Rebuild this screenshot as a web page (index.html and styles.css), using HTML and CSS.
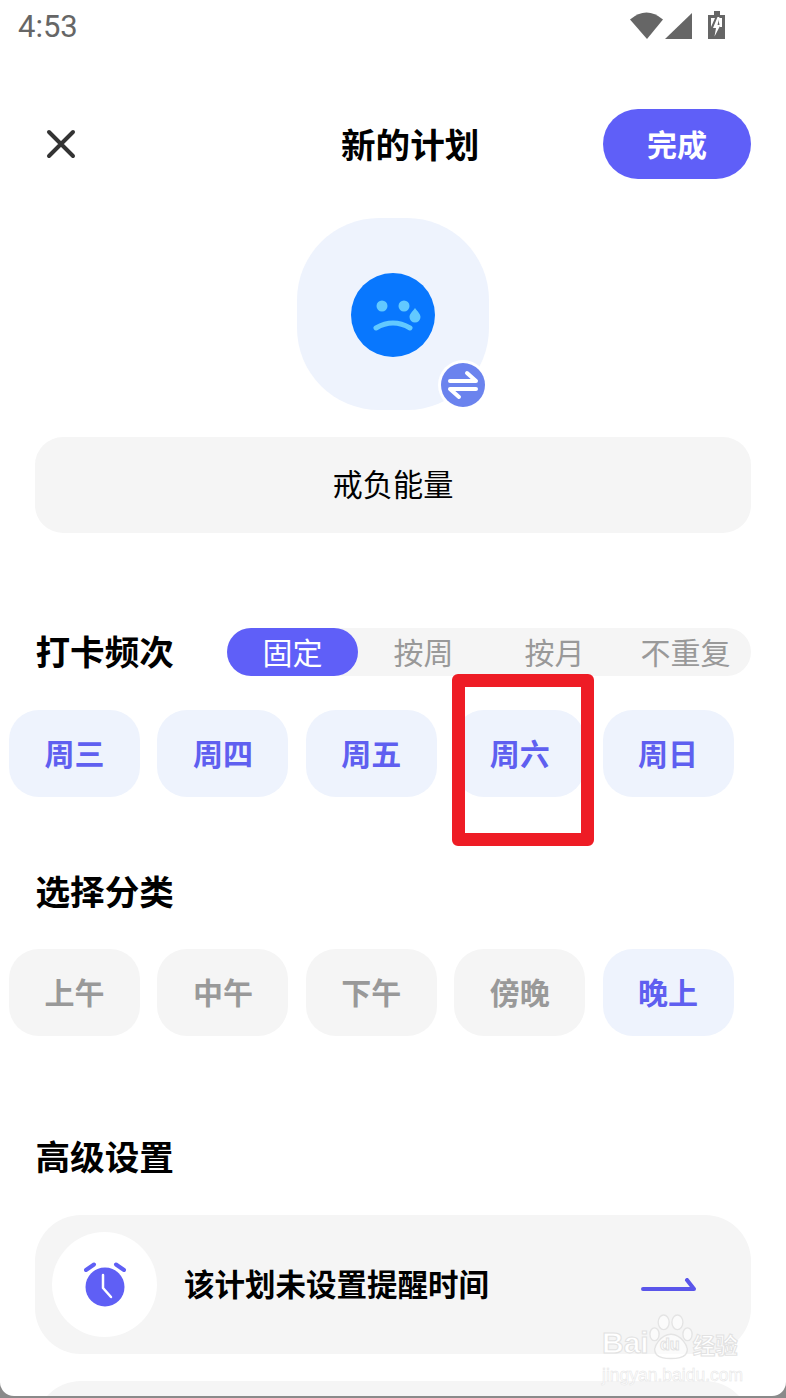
FILE: index.html
```html
<!DOCTYPE html>
<html lang="zh-CN">
<head>
	<meta charset="UTF-8">
	<title>新的计划</title>
	<link rel="stylesheet" href="styles.css">
</head>
<body>
	<div class="screen">
		<div class="status">
			<span class="time">4:53</span>
			<svg class="status-icons" width="97" height="30" viewBox="0 0 97 30">
				<path d="M0 9.5 Q16.5 -4.5 33 9.5 L17 29 Z" fill="#666"/>
				<path d="M35 29 L62 3 V29 Z" fill="#666"/>
				<path d="M84 1 H90 V5 H95 V29 H78 V5 H84 Z" fill="#666"/>
				<path d="M81 8 H85 L81 17 Z M88 8 H92 V17 H90 Z" fill="#fff"/>
				<path d="M87.5 7 L83 18 H86 L84.5 26.5 L90.5 15 H87.5 L89.5 7 Z" fill="#fff"/>
			</svg>
		</div>

		<div class="header">
			<svg class="close" width="30" height="30" viewBox="0 0 30 30">
				<path d="M3 3 L27 27 M27 3 L3 27" stroke="#333" stroke-width="4" stroke-linecap="round"/>
			</svg>
			<h1 class="title">新的计划</h1>
			<a class="done">完成</a>
		</div>

		<div class="avatar">
			<svg class="face" width="84" height="84" viewBox="0 0 84 84">
				<circle cx="42" cy="42" r="42" fill="#0877fe"/>
				<circle cx="31" cy="33" r="5.5" fill="#62c9ff"/>
				<circle cx="53" cy="33" r="5.5" fill="#62c9ff"/>
				<path d="M64 35 C67 39 69.5 41 69.5 44 A5.5 5.5 0 0 1 58.5 44 C58.5 41 61 39 64 35 Z" fill="#62c9ff"/>
				<path d="M25 55 Q42 45 59 55" fill="none" stroke="#62c9ff" stroke-width="5" stroke-linecap="round"/>
			</svg>
			<span class="swap">
				<svg width="44" height="44" viewBox="0 0 44 44">
					<circle cx="22" cy="22" r="22" fill="#6b83ee"/>
					<path d="M9 18 H35 L26 10 M35 26 H9 L18 34" fill="none" stroke="#fff" stroke-width="4" stroke-linecap="round" stroke-linejoin="round"/>
				</svg>
			</span>
		</div>

		<div class="name">戒负能量</div>

		<div class="freq">
			<h2 class="label">打卡频次</h2>
			<ul class="tabs">
				<li class="on">固定</li>
				<li>按周</li>
				<li>按月</li>
				<li>不重复</li>
			</ul>
		</div>
		<ul class="chips chips-days">
			<li class="act">周三</li>
			<li class="act">周四</li>
			<li class="act">周五</li>
			<li class="act">周六</li>
			<li class="act">周日</li>
		</ul>

		<h2 class="label label-cat">选择分类</h2>
		<ul class="chips chips-cat">
			<li>上午</li>
			<li>中午</li>
			<li>下午</li>
			<li>傍晚</li>
			<li class="act">晚上</li>
		</ul>

		<h2 class="label label-adv">高级设置</h2>
		<div class="card">
			<span class="bubble">
				<svg width="46" height="46" viewBox="0 0 46 46">
					<path d="M4 8 L12 2.5 M42 8 L34 2.5" stroke="#5f5ff5" stroke-width="4" stroke-linecap="round"/>
					<circle cx="23" cy="25" r="19.5" fill="#5f5ff5"/>
					<path d="M21 13 V26 L29 35" fill="none" stroke="#fff" stroke-width="2.5" stroke-linecap="round" stroke-linejoin="round"/>
				</svg>
			</span>
			<span class="card-text">该计划未设置提醒时间</span>
			<svg class="arrow" width="56" height="14" viewBox="0 0 56 14">
				<path d="M2 11 H53 L46 2" fill="none" stroke="#5a55ea" stroke-width="4" stroke-linecap="round" stroke-linejoin="round"/>
			</svg>
		</div>
		<div class="card card-next"></div>

		<div class="mark"></div>
		<div class="baidu">
			<div class="baidu-top">
				<span>Bai</span>
				<svg width="44" height="46" viewBox="0 0 48 50">
					<g fill="#fff" fill-opacity=".6" stroke="#e4e4e4" stroke-width="1.5">
						<ellipse cx="6" cy="22" rx="5" ry="7"/>
						<ellipse cx="16" cy="9" rx="6" ry="8"/>
						<ellipse cx="31" cy="9" rx="6" ry="8"/>
						<ellipse cx="42" cy="22" rx="5" ry="7"/>
						<path d="M24 22 C34 22 46 36 40 44 C34 50 14 50 8 44 C2 36 14 22 24 22 Z"/>
					</g>
				</svg>
				<span class="du">du</span>
				<span class="jy">经验</span>
			</div>
			<div class="baidu-url">jingyan.baidu.com</div>
		</div>
	</div>
</body>
</html>
```

FILE: styles.css
```css
* {
	box-sizing: border-box;
}
html, body {
	margin: 0;
	height: 1398px;
	overflow: hidden;
	background: #8a8a8a;
}
ul {
	list-style: none;
	padding: 0;
	margin: 0;
}
h1, h2 {
	margin: 0;
}
.screen {
	position: relative;
	height: 1396px;
	overflow: hidden;
	background: #fff;
	border-radius: 0 0 14px 14px;
	font-family: "Noto Sans CJK SC", "Noto Sans", sans-serif;
	color: #000;
}

/* status bar */
.status {
	height: 56px;
	display: flex;
	justify-content: space-between;
	padding: 10px 59px 0 18px;
}
.time {
	font-family: Roboto, sans-serif;
	font-size: 31px;
	line-height: 34px;
	color: #666;
}

/* header */
.header {
	height: 70px;
	margin-top: 53px;
	padding: 0 35px 0 46px;
	display: flex;
	align-items: center;
}
.title {
	margin-left: 265px;
	font-size: 34.6px;
	line-height: 68px;
	height: 70px;
	font-weight: 700;
	white-space: nowrap;
}
.done {
	margin-left: auto;
	width: 148px;
	height: 70px;
	border-radius: 35px;
	background: #5f5ff8;
	color: #fff;
	font-size: 30px;
	font-weight: 700;
	line-height: 68px;
	text-align: center;
}

/* avatar */
.avatar {
	position: relative;
	width: 192px;
	height: 192px;
	margin: 39px auto 0;
	border-radius: 82px;
	background: #eef3fd;
	display: flex;
	align-items: center;
	justify-content: center;
}
.face {
	margin-top: 2px;
}
.swap {
	position: absolute;
	left: 141px;
	top: 142px;
	width: 50px;
	height: 50px;
	padding: 3px;
	border-radius: 50%;
	background: #fff;
}
.swap svg {
	display: block;
}

.name {
	height: 96px;
	margin: 27px 35px 0;
	border-radius: 28px;
	background: #f5f5f5;
	font-size: 30.2px;
	line-height: 93px;
	text-align: center;
}

/* sections */
.label {
	height: 48px;
	font-size: 34.6px;
	font-weight: 700;
	line-height: 44px;
	white-space: nowrap;
}
.freq {
	display: flex;
	justify-content: space-between;
	margin-top: 95px;
	padding: 0 35px 0 35.5px;
}
.tabs {
	width: 524px;
	height: 48px;
	display: flex;
	border-radius: 24px;
	background: #f5f5f5;
}
.tabs li {
	width: 131px;
	font-size: 30px;
	line-height: 46px;
	text-align: center;
	color: #999;
}
.tabs .on {
	border-radius: 24px;
	background: #5f5ff8;
	color: #fff;
}
.chips {
	display: flex;
	gap: 17.4px;
	padding-left: 9px;
}
.chips li {
	width: 131px;
	height: 87px;
	border-radius: 30px;
	background: #f5f5f5;
	color: #999;
	font-size: 30px;
	font-weight: 700;
	line-height: 85px;
	text-align: center;
}
.chips .act {
	background: #eef3fd;
	color: #5f5ff0;
}
.chips-days {
	margin-top: 34px;
}
.label-cat {
	margin: 71px 0 0 35.5px;
}
.chips-cat {
	margin-top: 33px;
}
.label-adv {
	margin: 97px 0 0 35.5px;
}

/* cards */
.card {
	height: 139px;
	margin: 34px 35px 0;
	padding: 0 54px 0 17px;
	border-radius: 46px;
	background: #f5f5f5;
	display: flex;
	align-items: center;
}
.bubble {
	width: 105px;
	height: 105px;
	border-radius: 50%;
	background: #fff;
	display: flex;
	align-items: center;
	justify-content: center;
}
.card-text {
	margin: 0 0 3px 27px;
	font-size: 30.5px;
	font-weight: 700;
	white-space: nowrap;
}
.arrow {
	margin-left: auto;
}
.card-next {
	margin-top: 27px;
}

/* red annotation over the screenshot */
.mark {
	position: absolute;
	left: 452px;
	top: 674px;
	width: 142px;
	height: 172px;
	border: 13px solid #ee1c25;
	border-radius: 6px;
}

/* watermark */
.baidu {
	position: absolute;
	left: 602px;
	top: 1312px;
	width: 142px;
	color: #fff;
}
.baidu-top {
	display: flex;
	align-items: flex-end;
	height: 48px;
	position: relative;
}
.baidu-top span {
	font-family: "Liberation Sans", sans-serif;
	font-size: 30px;
	line-height: 34px;
	font-weight: 700;
	-webkit-text-stroke: 1px #e2e2e2;
}
.baidu-top .du {
	position: absolute;
	left: 58px;
	top: 24px;
	font-size: 16px;
	line-height: 18px;
}
.baidu-top .jy {
	font-family: "Noto Sans CJK SC", sans-serif;
	font-size: 22.5px;
	line-height: 32px;
}
.baidu-url {
	font-family: "Liberation Sans", sans-serif;
	font-size: 17.5px;
	line-height: 22px;
	margin-top: 4px;
	color: #fff;
	-webkit-text-stroke: .5px #e4e4e4;
	white-space: nowrap;
}
```
